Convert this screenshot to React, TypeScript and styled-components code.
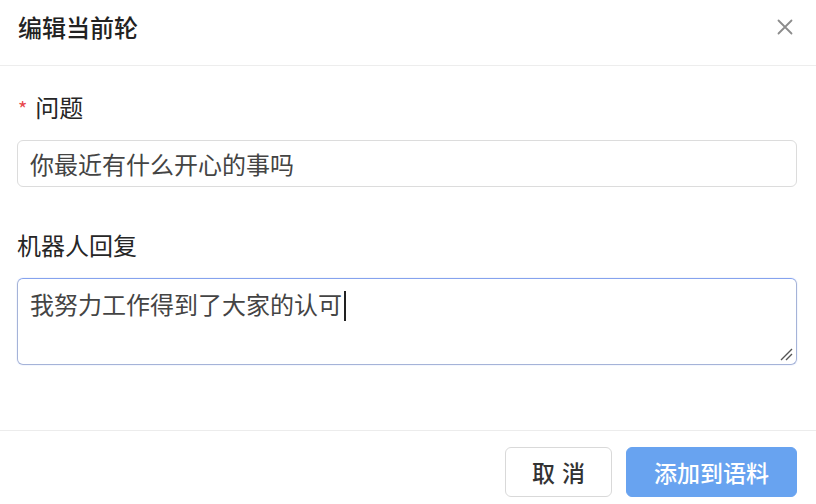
import React from 'react';
import styled, { createGlobalStyle } from 'styled-components';

const GlobalStyle = createGlobalStyle`
    html, body {
        margin: 0;
        padding: 0;
        background: #ffffff;
    }
    body {
        font-family: "Noto Sans CJK SC", "Noto Sans", sans-serif;
        color: #333;
    }
    * {
        box-sizing: border-box;
    }
`;

const Modal = styled.div`
    width: 816px;
    height: 504px;
    background: #fff;
    display: flex;
    flex-direction: column;
`;

const Header = styled.div`
    height: 66px;
    padding: 10px 22px 0 18px;
    display: flex;
    justify-content: space-between;
    align-items: flex-start;
    border-bottom: 1px solid #ededed;
`;

const Title = styled.h2`
    margin: 0;
    font-size: 24px;
    line-height: 34px;
    font-weight: 500;
    color: #222;
`;

const CloseButton = styled.button`
    border: none;
    background: none;
    padding: 0;
    margin-top: 8px;
    width: 18px;
    height: 18px;
    display: flex;
    align-items: center;
    justify-content: center;
    cursor: pointer;
`;

const Body = styled.div`
    flex: 1;
    padding: 24px 19px 0 17px;
`;

const Field = styled.div`
    display: flex;
    flex-direction: column;
    margin-bottom: 41px;
`;

const Label = styled.label`
    display: flex;
    align-items: center;
    gap: 8px;
    font-size: 24px;
    line-height: 34px;
    color: #262626;
    margin-bottom: 16px;
`;

const Required = styled.span`
    color: #e8484c;
    font-size: 20px;
    line-height: 20px;
    margin-left: 1px;
    margin-top: 4px;
`;

const Input = styled.div`
    height: 47px;
    border: 1px solid #dcdcdc;
    border-radius: 6px;
    padding: 0 12px;
    display: flex;
    align-items: center;
    font-size: 24px;
    color: #444;
`;

const TextArea = styled.div`
    position: relative;
    height: 87px;
    border: 1px solid #a5b3d8;
    border-top-color: #86a3ee;
    border-radius: 6px;
    padding: 8px 12px;
    font-size: 24px;
    line-height: 34px;
    color: #444;
    box-shadow: 0 0 0 1px rgba(120, 150, 240, 0.08);
`;

const Caret = styled.span`
    display: inline-block;
    width: 1.5px;
    height: 30px;
    background: #222;
    vertical-align: -7px;
    margin-left: 2px;
`;

const ResizeHandle = styled.svg`
    position: absolute;
    right: 3px;
    bottom: 3px;
`;

const Footer = styled.div`
    border-top: 1px solid #ececec;
    height: 74px;
    padding: 16px 19px 0 0;
    display: flex;
    justify-content: flex-end;
    align-items: flex-start;
    gap: 14px;
`;

const Button = styled.button<{ $primary?: boolean }>`
    height: 50px;
    width: ${(p) => (p.$primary ? '171px' : '107px')};
    padding: 0;
    border-radius: 6px;
    font-family: "Noto Sans CJK SC", "Noto Sans", sans-serif;
    font-size: 23px;
    font-weight: 500;
    border: 1px solid ${(p) => (p.$primary ? '#68a3f0' : '#d9d9d9')};
    background: ${(p) => (p.$primary ? '#68a3f0' : '#fff')};
    color: ${(p) => (p.$primary ? '#fff' : '#333')};
    letter-spacing: ${(p) => (p.$primary ? '0' : '0.3em')};
    text-indent: ${(p) => (p.$primary ? '0' : '0.3em')};
    cursor: pointer;
`;

const App: React.FC = () => {
  return (
    <>
        <GlobalStyle />
        <Modal>
            <Header>
                <Title>编辑当前轮</Title>
                <CloseButton aria-label="关闭">
                    <svg width="16" height="16" viewBox="0 0 16 16">
                        <path d="M1.5 1.5 L14.5 14.5 M14.5 1.5 L1.5 14.5" stroke="#8c8c8c" strokeWidth="1.8" strokeLinecap="round" />
                    </svg>
                </CloseButton>
            </Header>
            <Body>
                <Field>
                    <Label><Required>*</Required>问题</Label>
                    <Input>你最近有什么开心的事吗</Input>
                </Field>
                <Field>
                    <Label>机器人回复</Label>
                    <TextArea>
                        我努力工作得到了大家的认可<Caret />
                        <ResizeHandle width="14" height="14" viewBox="0 0 14 14">
                            <path d="M2 13 L13 2 M7 13 L13 7" stroke="#555" strokeWidth="1.4" />
                        </ResizeHandle>
                    </TextArea>
                </Field>
            </Body>
            <Footer>
                <Button>取消</Button>
                <Button $primary>添加到语料</Button>
            </Footer>
        </Modal>
    </>
  )
}

export default App
